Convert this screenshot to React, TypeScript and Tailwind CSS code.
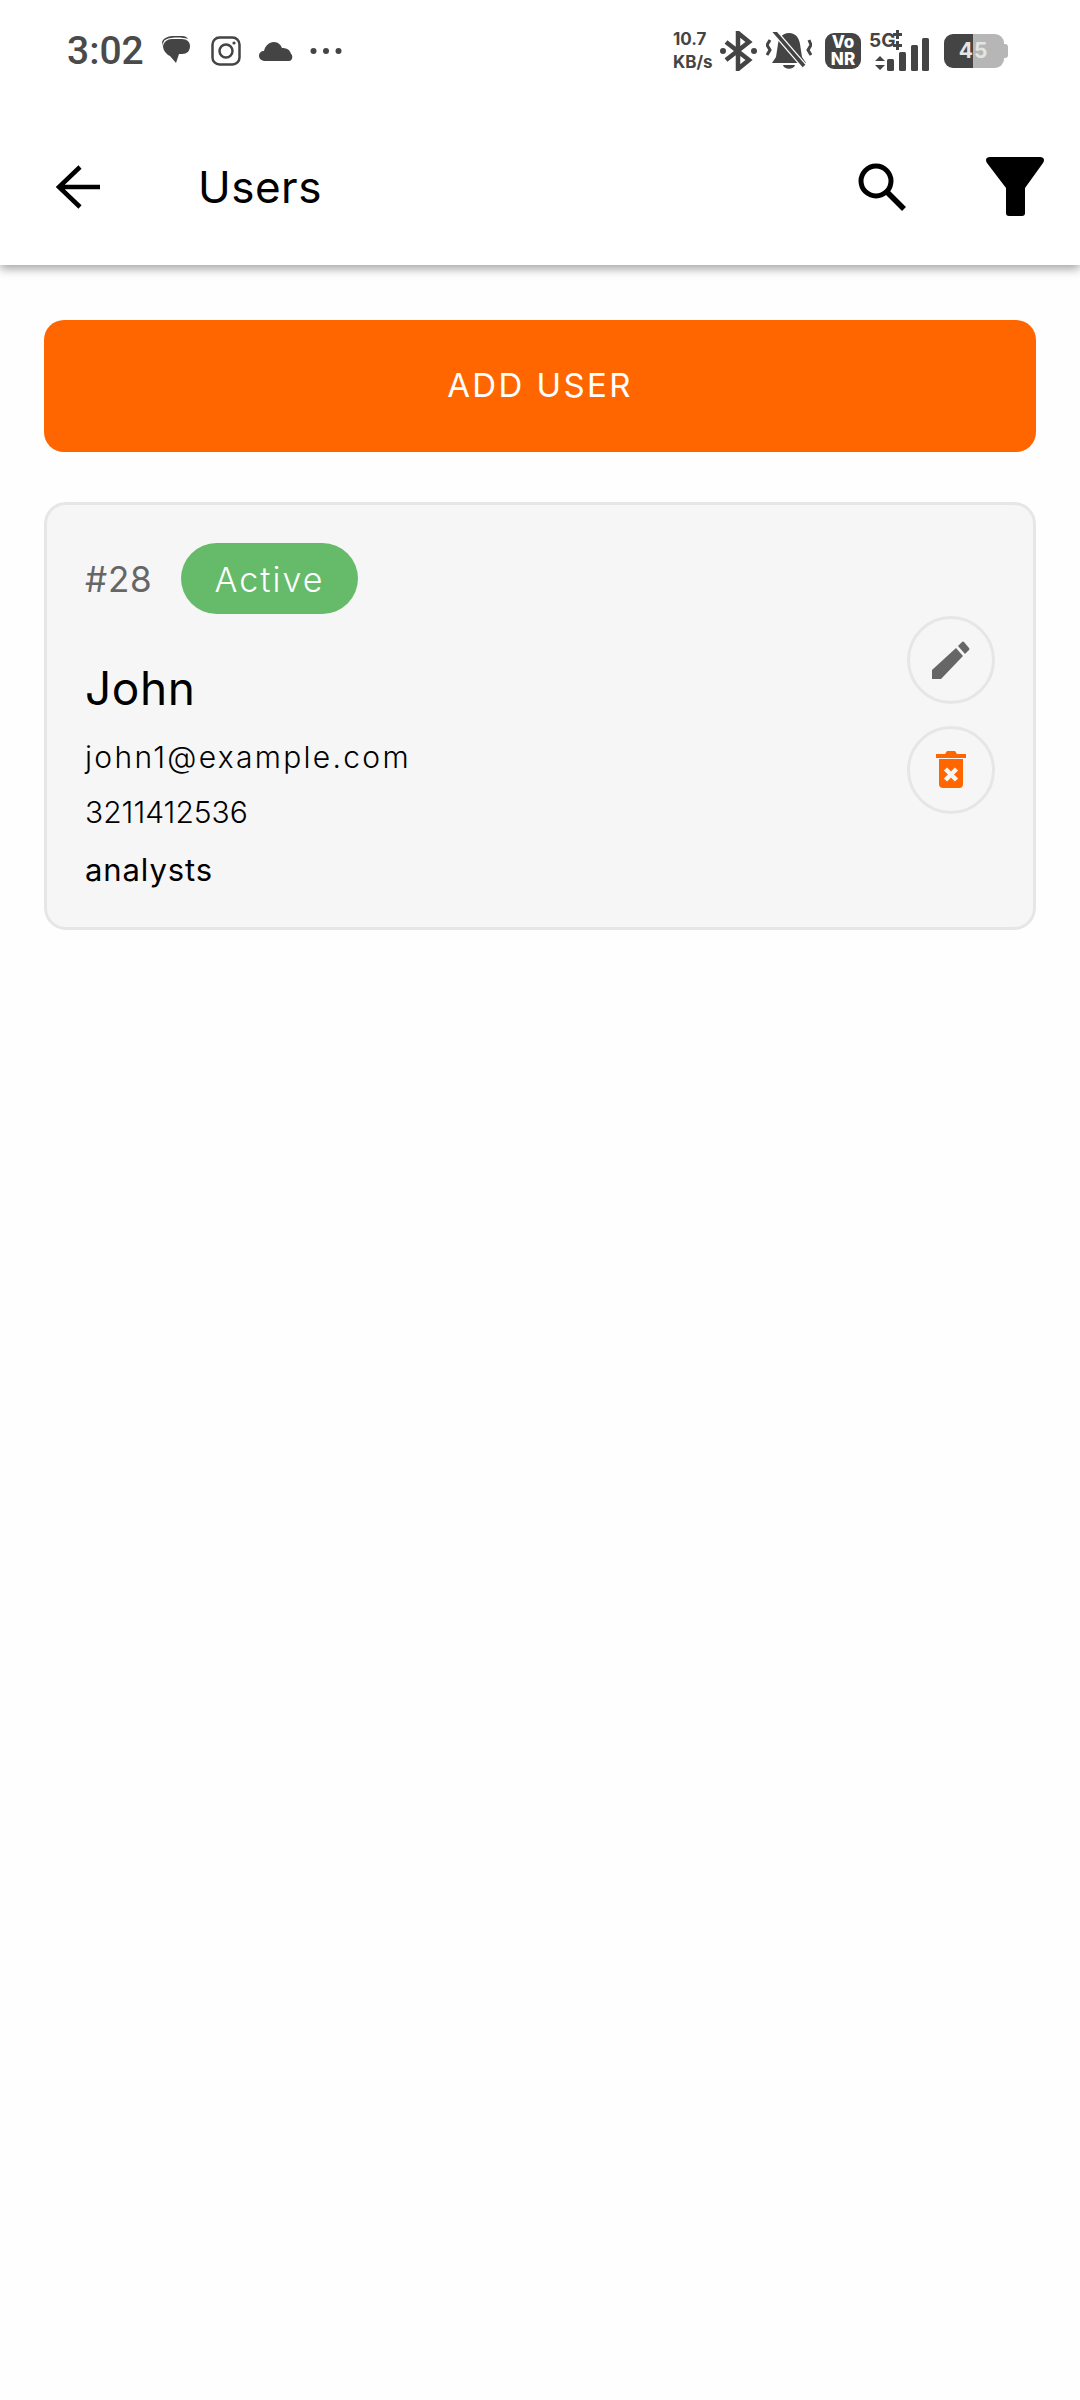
import React from 'react'

const font = "font-['Inter','Noto_Sans',sans-serif]"

const StatusLeft: React.FC = () => (
  <div className="flex items-center">
    <span className="ml-[67px] w-[74px] font-['Roboto',sans-serif] text-[39px] leading-none font-medium text-[#4a4a4a]">3:02</span>
    <svg className="ml-[20px]" width="30" height="30" viewBox="0 0 30 30" fill="#444444">
      <path d="M1 6 C3 1 8 0 14 0 H21 C24 0 26 1 27 3 C22 1 10 1 6 3 C3 4 2 6 2 10 Z" />
      <path d="M11 3 H21 C26 3 29 6 29 10 C29 15 26 18 21 18 H18 L15 27 L9 20 C5 18 2 14 2 10 C3 6 6 3 11 3 Z" />
    </svg>
    <svg className="ml-[20px]" width="30" height="30" viewBox="0 0 30 30" fill="none" stroke="#444444" strokeWidth="2.5">
      <rect x="1.5" y="1.5" width="27" height="27" rx="7" />
      <circle cx="15" cy="15" r="6.5" />
      <circle cx="23" cy="7" r="1.6" fill="#444444" stroke="none" />
    </svg>
    <svg className="ml-[18px]" width="34" height="20" viewBox="0 0 34 20" fill="#444444">
      <path d="M7 20 C3 20 0 18 0 15 C0 12 2 10 5 10 C6 5 10 1 15 1 C19 1 22 4 23 7 C28 7 31 9 32 13 C34 14 34 20 30 20 Z" />
    </svg>
    <svg className="ml-[17px]" width="32" height="8" viewBox="0 0 32 8" fill="#444444">
      <circle cx="3.5" cy="4" r="3" />
      <circle cx="16" cy="4" r="3" />
      <circle cx="28.5" cy="4" r="3" />
    </svg>
  </div>
)

const StatusRight: React.FC = () => (
  <div className="flex items-center">
    <div className="flex w-[41px] flex-col font-['Inter',sans-serif] text-[17px] leading-[23px] font-bold text-[#444444]">
      <span>10.7</span>
      <span>KB/s</span>
    </div>
    <svg className="ml-[6px]" width="37" height="40" viewBox="0 0 37 40" fill="none" stroke="#444444" strokeWidth="4.5">
      <path d="M6 11 L29 29 L18 38 V2 L29 11 L6 29" />
      <circle cx="3" cy="20" r="3" fill="#444444" stroke="none" />
      <circle cx="34" cy="20" r="3" fill="#444444" stroke="none" />
    </svg>
    <svg className="ml-[9px]" width="46" height="38" viewBox="0 0 46 38" fill="#444444">
      <path d="M23 1 C30 1 33 6 34 12 L36 25 L40 31 H6 L10 25 L12 12 C13 6 16 1 23 1 Z" />
      <path d="M17 33 H29 C28 38 18 38 17 33 Z" />
      <path d="M7 -2 L38 34" stroke="#ffffff" strokeWidth="6" />
      <path d="M7 -2 L38 34" stroke="#444444" strokeWidth="3.5" />
      <path d="M4 8 L1 13 L4 18 L1 23" fill="none" stroke="#444444" strokeWidth="3" />
      <path d="M43 8 L45 13 L42 18 L45 23" fill="none" stroke="#444444" strokeWidth="3" />
    </svg>
    <div className="ml-[13px] flex h-[36px] w-[36px] flex-col items-center justify-center rounded-[9px] bg-[#444444] font-['Inter',sans-serif] text-[17px] leading-[17px] font-extrabold text-white">
      <span>Vo</span>
      <span>NR</span>
    </div>
    <svg className="ml-[8px]" width="61" height="42" viewBox="0 0 61 42" fill="#444444">
      <text x="0" y="17" fontFamily="Inter, sans-serif" fontSize="19" fontWeight="700">5G</text>
      <path d="M27 0 H30 V3 H33 V6 H30 V9 H27 V6 H24 V3 H27 Z M27 11 H30 V14 H33 V17 H30 V20 H27 V17 H24 V14 H27 Z" />
      <path d="M10 29 L15 24 L20 29 Z M10 33 H20 L15 38 Z" transform="translate(-4 2)" />
      <rect x="18" y="29" width="7" height="12" rx="1.5" />
      <rect x="30" y="22" width="7" height="19" rx="1.5" />
      <rect x="42" y="15" width="7" height="26" rx="1.5" />
      <rect x="53" y="8" width="7" height="33" rx="1.5" />
    </svg>
    <div className="ml-[14px] flex items-center">
      <div className="flex h-[34px] w-[60px] overflow-hidden rounded-[9px] font-['Inter',sans-serif] text-[21px] leading-[34px] font-bold">
        <div className="flex w-[29px] justify-end bg-[#444444] text-[#e4e4e4]">4</div>
        <div className="flex-1 bg-[#b6b6b6] pl-[1px] text-[#e4e4e4]">5</div>
      </div>
      <div className="h-[14px] w-[4px] rounded-r-[3px] bg-[#b6b6b6]" />
    </div>
  </div>
)

const App: React.FC = () => {
  return (
    <div className={`flex min-h-[2400px] w-[1080px] flex-col bg-[#fefefe] ${font}`}>
      <header className="relative flex h-[265px] flex-col bg-white shadow-[0_4px_9px_rgba(0,0,0,0.35)]">
        <div className="flex h-[100px] items-center justify-between pt-[2px] pr-[72px]">
          <StatusLeft />
          <StatusRight />
        </div>
        <div className="flex h-[165px] items-center pt-[8px] pr-[36px] pl-[56px]">
          <svg width="44" height="44" viewBox="0 0 44 44" fill="none" stroke="#000000" strokeWidth="4.5">
            <path d="M45 22 H3 M24 2 L3 22 L24 42" />
          </svg>
          <h1 className="ml-[98px] flex-1 text-[44px] leading-none font-normal tracking-[0.5px] text-black">Users</h1>
          <svg className="mr-[80px]" width="48" height="48" viewBox="0 0 48 48" fill="none" stroke="#000000" strokeWidth="5">
            <circle cx="18" cy="18" r="15" />
            <path d="M29 29 L46 46" strokeWidth="5.5" />
          </svg>
          <svg width="58" height="60" viewBox="0 0 58 60" fill="#000000">
            <path d="M4 0 H54 C58 0 59 3 57 6 L39 31 V56 C39 58 38 59 36 59 H23 C21 59 20 58 20 56 V31 L1 6 C-1 3 0 0 4 0 Z" />
          </svg>
        </div>
      </header>

      <main className="flex flex-col px-[44px] pt-[55px]">
        <button className="flex h-[132px] items-center justify-center rounded-[20px] bg-[#ff6600] text-[33px] tracking-[2.4px] text-white">
          ADD USER
        </button>

        <section className="mt-[50px] flex h-[428px] items-start justify-between rounded-[22px] border-[3px] border-[#e6e6e6] bg-[#f6f6f6] pt-[38px] pr-[38px] pl-[38px]">
          <div className="flex flex-col">
            <div className="flex items-center">
              <span className="w-[96px] pt-[2px] text-[35px] leading-none tracking-[0.8px] text-[#666666]">#28</span>
              <span className="flex h-[71px] w-[177px] items-center justify-center rounded-full bg-[#66bb6a] pt-[2px] text-[34px] font-light tracking-[2px] text-white">
                Active
              </span>
            </div>
            <div className="mt-[45px] text-[46px] leading-[58px] tracking-[0.6px] text-black">John</div>
            <div className="mt-[20px] text-[30px] leading-[40px] font-light tracking-[2.3px] text-black">john1@example.com</div>
            <div className="mt-[15px] text-[30px] leading-[40px] font-light text-black">3211412536</div>
            <div className="mt-[18px] text-[31px] leading-[40px] tracking-[0.9px] text-black">analysts</div>
          </div>
          <div className="mt-[73px] flex flex-col gap-[22px]">
            <button className="flex h-[88px] w-[88px] items-center justify-center rounded-full border-[3px] border-[#e6e6e6]">
              <svg width="38" height="38" viewBox="0 0 38 38" fill="#666666">
                <path d="M0 38 V29 L24 7 L31 15 L9 38 Z" />
                <path d="M26 5 L30 1 Q31 0 32 1 L37 7 Q38 8 37 9 L33 13 Z" />
              </svg>
            </button>
            <button className="flex h-[88px] w-[88px] items-center justify-center rounded-full border-[3px] border-[#e6e6e6]">
              <svg width="30" height="38" viewBox="0 0 30 38" fill="#ff6600">
                <path d="M0 3 H9 L11 0 H19 L21 3 H30 V7 H0 Z" />
                <path d="M3 8 H27 V33 Q27 37 23 37 H7 Q3 37 3 33 Z" />
                <path d="M9.5 18 L20.5 29 M20.5 18 L9.5 29" stroke="#f6f6f6" strokeWidth="4.5" />
              </svg>
            </button>
          </div>
        </section>
      </main>
    </div>
  )
}

export default App
